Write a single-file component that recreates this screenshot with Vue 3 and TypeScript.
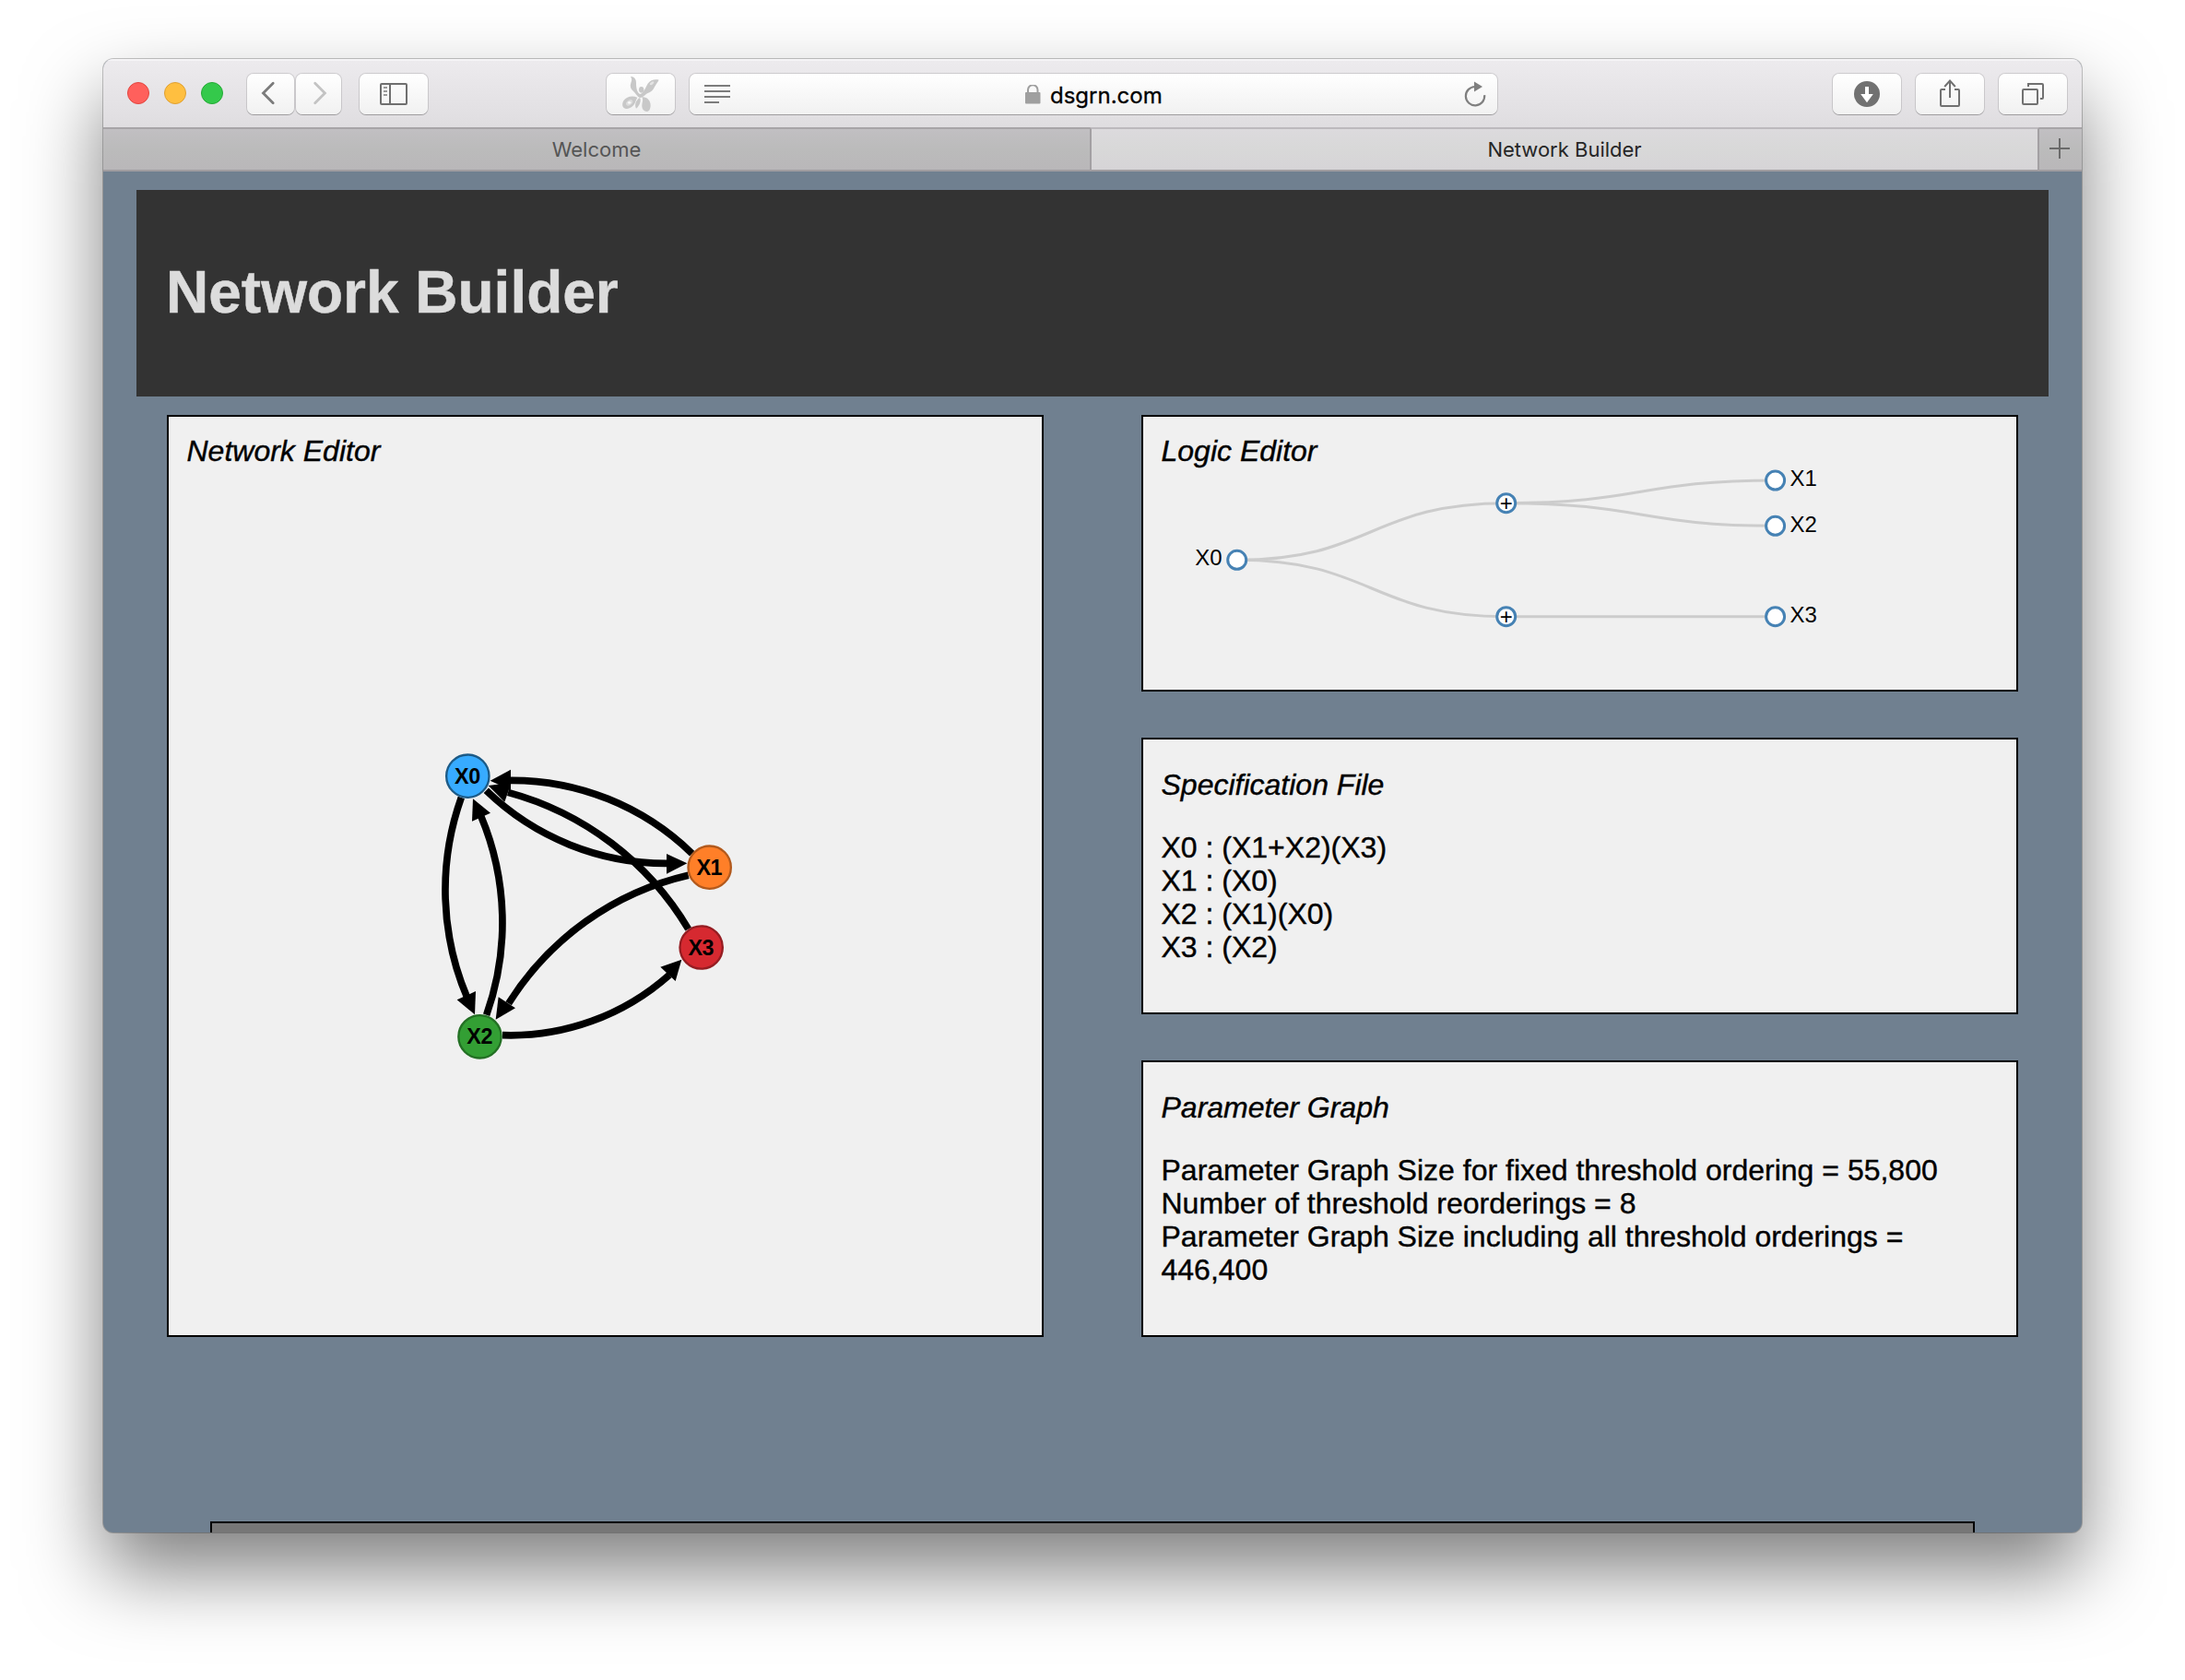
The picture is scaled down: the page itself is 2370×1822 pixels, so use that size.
<script setup lang="ts">
interface GraphNode {
  id: string
  x: number
  y: number
  fill: string
  stroke: string
}

interface GraphEdge {
  path: string
  head: string
}

interface TreeNode {
  label: string
  x: number
  y: number
  kind: 'root' | 'op' | 'leaf'
}

// Network graph, in thirds of a pixel
const nodes: GraphNode[] = [
  { id: 'X0', x: 202, y: 185, fill: '#37abff', stroke: '#1c5a86' },
  { id: 'X1', x: 989, y: 482, fill: '#ff7f28', stroke: '#b2591c' },
  { id: 'X2', x: 241.5, y: 1033, fill: '#339f34', stroke: '#237024' },
  { id: 'X3', x: 962, y: 742.5, fill: '#d62930', stroke: '#951d22' },
]

const edges: GraphEdge[] = [
  { path: 'M181 255A895 895 0 0 0 202 910', head: '225,961 167,913 228,885' },
  { path: 'M263 962A895 895 0 0 0 245 315', head: '219,259 276,305 216,332' },
  { path: 'M262 232A841 841 0 0 0 855 469', head: '916,469 849,438 849,503' },
  { path: 'M932 437A841 841 0 0 0 338 199', head: '275,200 342,164 342,230' },
  { path: 'M920 508A940 940 0 0 0 335 925', head: '293,977 302,904 357,940' },
  { path: 'M315 1028A777 777 0 0 0 858 832', head: '898,782 829,806 878,852' },
  { path: 'M920 683A980 980 0 0 0 333 238', head: '269,216 344,206 322,269' },
]

const tree: TreeNode[] = [
  { label: 'X0', x: 101.7, y: 155.3, kind: 'root' },
  { label: '+', x: 393.7, y: 93.7, kind: 'op' },
  { label: '+', x: 393.7, y: 216.7, kind: 'op' },
  { label: 'X1', x: 685.6, y: 69, kind: 'leaf' },
  { label: 'X2', x: 685.6, y: 118.3, kind: 'leaf' },
  { label: 'X3', x: 685.6, y: 216.7, kind: 'leaf' },
]

const treeLinks: [number, number][] = [[0, 1], [0, 2], [1, 3], [1, 4], [2, 5]]

function diagonal([from, to]: [number, number]): string {
  const a = tree[from]
  const b = tree[to]
  const mid = (a.x + b.x) / 2
  return `M${a.x} ${a.y}C${mid} ${a.y} ${mid} ${b.y} ${b.x} ${b.y}`
}

const specification = ['X0 : (X1+X2)(X3)', 'X1 : (X0)', 'X2 : (X1)(X0)', 'X3 : (X2)']
const parameters = [
  'Parameter Graph Size for fixed threshold ordering = 55,800',
  'Number of threshold reorderings = 8',
  'Parameter Graph Size including all threshold orderings = 446,400',
]
</script>

<template>
  <div class="desktop">
    <div class="window">
      <div class="toolbar">
        <div class="lights">
          <i class="light red"></i>
          <i class="light yellow"></i>
          <i class="light green"></i>
        </div>
        <div class="btn back">
          <svg width="51" height="44"><path d="M28.2 10.3L17.5 21L28.2 31.7" fill="none" stroke="#7b7b7b" stroke-width="2.8" stroke-linecap="round" /></svg>
        </div>
        <div class="btn forward">
          <svg width="49" height="44"><path d="M20.7 10.3L31.4 21L20.7 31.7" fill="none" stroke="#c3c3c3" stroke-width="2.8" stroke-linecap="round" /></svg>
        </div>
        <div class="btn sidebar">
          <svg width="74" height="44" fill="none" stroke="#6f6f6f" stroke-width="2">
            <rect x="23" y="11" width="28" height="22" rx="1" />
            <path d="M33 11V33" />
            <path d="M26 15H30M26 19H30M26 23H30" stroke="#999" />
          </svg>
        </div>
        <div class="btn extension">
          <svg width="74" height="44">
            <g transform="translate(-18 -30) scale(.33333)" fill="#c8c8c8">
              <path d="M132 99C145 98 151 110 150 122C150 138 154 152 163 156C175 152 180 135 188 122C196 111 210 107 224 110C219 118 215 124 210 133C206 143 198 150 188 153C180 157 172 168 163 168C152 164 150 154 141 147C132 140 129 130 133 120C136 112 137 106 132 99Z" />
              <ellipse cx="167" cy="142" rx="8" ry="10" />
              <path d="M154 167C138 160 118 164 109 178C102 190 106 203 117 204C134 205 146 190 149 178Z" />
              <path d="M162 168C168 178 160 196 150 203C144 192 148 176 162 168Z" />
              <path d="M169 166C185 164 197 178 197 192C197 205 192 213 184 213C174 212 168 203 169 192C170 182 174 176 169 166Z" />
              <ellipse cx="128" cy="184" rx="12" ry="8" fill="#dcdcdc" transform="rotate(-35 128 184)" />
              <ellipse cx="128" cy="184" rx="5" ry="4" fill="#f8f8f8" />
              <ellipse cx="201" cy="121" rx="8" ry="4" fill="#e4e4e4" transform="rotate(-35 201 121)" />
            </g>
          </svg>
        </div>
        <div class="btn address">
          <svg class="reader" width="28" height="20" fill="#7c7c7c">
            <rect width="28" height="2" />
            <rect y="6" width="28" height="2" />
            <rect y="12" width="28" height="2" />
            <rect y="18" width="16" height="2" />
          </svg>
          <div class="site">
            <svg width="17" height="21">
              <rect x="0" y="8" width="16.5" height="12.5" rx="1" fill="#9f9f9f" />
              <path d="M3 9V5.5A4.8 4.8 0 0 1 13.5 5.5V9" fill="none" stroke="#9f9f9f" stroke-width="2" />
            </svg>
            <span>dsgrn.com</span>
          </div>
          <svg class="reload" width="26" height="30">
            <path d="M13 6A10.2 10.2 0 1 0 23.2 15.2" fill="none" stroke="#7f7f7f" stroke-width="2.2" />
            <path d="M12 .4L21 6L12 11.6Z" fill="#7f7f7f" />
          </svg>
        </div>
        <div class="btn download">
          <svg width="74" height="44">
            <circle cx="37" cy="22" r="14" fill="#717171" />
            <path d="M35 14H39V22H43.8L37 31.3L30.2 22H35Z" fill="#fff" />
          </svg>
        </div>
        <div class="btn share">
          <svg width="74" height="44" fill="none" stroke="#717171" stroke-width="2">
            <path d="M32 17H28Q27 17 27 18V34Q27 35 28 35H46Q47 35 47 34V18Q47 17 46 17H42" />
            <path d="M37 26V8M31.2 14L37 7.5L42.8 14" />
          </svg>
        </div>
        <div class="btn overview">
          <svg width="74" height="44" fill="none" stroke="#717171" stroke-width="2">
            <rect x="26" y="17" width="16" height="16" rx="1" />
            <path d="M32 14V11H47Q48 11 48 12V26Q48 27 47 27H45" />
          </svg>
        </div>
      </div>

      <div class="tabs">
        <div class="tab">Welcome</div>
        <div class="tab active">Network Builder</div>
        <div class="tab add">
          <svg width="22" height="22" stroke="#6a6a6a" stroke-width="2"><path d="M11 0V22M0 11H22" /></svg>
        </div>
      </div>

      <main class="page">
        <header class="banner"><h1>Network Builder</h1></header>
        <div class="columns">
          <section class="panel editor">
            <svg class="canvas" width="947" height="996">
              <g transform="translate(257 328) scale(.33333)">
                <g v-for="(edge, i) in edges" :key="i">
                  <path :d="edge.path" fill="none" stroke="#000" stroke-width="23" />
                  <polygon :points="edge.head" />
                </g>
                <g v-for="node in nodes" :key="node.id">
                  <circle :cx="node.x" :cy="node.y" r="69.5" :fill="node.fill" :stroke="node.stroke" stroke-width="7" />
                  <text class="node-label" :x="node.x - 1" :y="node.y + 24.5">{{ node.id }}</text>
                </g>
              </g>
            </svg>
            <p class="title">Network Editor</p>
          </section>
          <div class="stack">
            <section class="panel logic">
              <svg class="canvas" width="947" height="296">
                <path v-for="(link, i) in treeLinks" :key="i" :d="diagonal(link)" fill="none" stroke="#ccc" stroke-width="3" />
                <g v-for="(n, i) in tree" :key="i">
                  <circle :cx="n.x" :cy="n.y" r="10" fill="#fff" stroke="#4682b4" stroke-width="3" />
                  <text v-if="n.kind === 'root'" class="tree-label" :x="n.x - 16" :y="n.y + 5.9" text-anchor="end">{{ n.label }}</text>
                  <text v-else-if="n.kind === 'leaf'" class="tree-label" :x="n.x + 16" :y="n.y + 6.2">{{ n.label }}</text>
                  <text v-else class="tree-label" :x="n.x" :y="n.y + 8.1" text-anchor="middle">{{ n.label }}</text>
                </g>
              </svg>
              <p class="title">Logic Editor</p>
            </section>
            <section class="panel info">
              <p class="title">Specification File</p>
              <p class="lines"><span v-for="line in specification" :key="line">{{ line }}</span></p>
            </section>
            <section class="panel info">
              <p class="title">Parameter Graph</p>
              <p class="lines"><span v-for="line in parameters" :key="line">{{ line }}</span></p>
            </section>
          </div>
        </div>
        <footer class="footer"></footer>
      </main>
    </div>
  </div>
</template>

<style>
body {
  background: #fff;
}
</style>

<style scoped>
.desktop {
  box-sizing: border-box;
  width: 2370px;
  height: 1822px;
  padding: 64px 112px 160px;
  overflow: hidden;
  background: #fff;
}
.window {
  display: flex;
  flex-direction: column;
  height: 1598px;
  overflow: hidden;
  border-radius: 11px;
  background: #708090;
  box-shadow: 0 0 0 1px rgba(0, 0, 0, 0.22), 0 42px 84px rgba(0, 0, 0, 0.5);
}
.toolbar {
  display: flex;
  flex: none;
  box-sizing: border-box;
  height: 74px;
  padding: 16px 16px 0 26px;
  background: linear-gradient(#edebee, #dfdde0);
  box-shadow: inset 0 2px 0 #f5f4f6;
}
.lights {
  display: flex;
  gap: 16px;
  margin: 9px 26px 0 0;
}
.light {
  box-sizing: border-box;
  width: 24px;
  height: 24px;
  border: 1px solid;
  border-radius: 50%;
}
.red { background: #ff605c; border-color: #e2463f; }
.yellow { background: #ffbf40; border-color: #dfa033; }
.green { background: #34c94b; border-color: #24aa35; }
.btn {
  flex: none;
  width: 74px;
  height: 44px;
  border-radius: 7px;
  background: linear-gradient(#fff, #f1f1f1);
  box-shadow: 0 0 0 1px rgba(0, 0, 0, 0.12), 0 1px 0 0 rgba(0, 0, 0, 0.2);
}
.btn svg { display: block; }
.back { width: 51px; margin-right: 2px; }
.forward { width: 49px; }
.sidebar { margin-left: 20px; }
.extension { margin-left: 194px; }
.address {
  display: flex;
  align-items: flex-start;
  box-sizing: border-box;
  width: 876px;
  margin-left: 16px;
  padding: 0 11px 0 16px;
}
.reader { margin-top: 12px; }
.reload { margin: 8px 0 0 auto; }
.site {
  display: flex;
  gap: 10px;
  margin-left: 320px;
  font: 24px/32px Inter, "Liberation Sans", sans-serif;
  color: #000;
  -webkit-text-stroke: 0.3px;
}
.site svg { margin-top: 12px; }
.site span { margin-top: 8px; }
.download { margin-left: 364px; }
.share, .overview { margin-left: 16px; }

.tabs {
  display: flex;
  flex: none;
  height: 48px;
  font: 22px/40px Inter, "Liberation Sans", sans-serif;
  text-align: center;
}
.tab {
  box-sizing: border-box;
  width: 1070px;
  padding-top: 2px;
  border-top: 2px solid #a7a4a7;
  border-bottom: 2px solid #a09da0;
  background: linear-gradient(#c1bfc2, #bbbbbb 50%, #b9b7b9);
  color: #555;
}
.tab.active {
  width: 1030px;
  border-top-color: #bcb9bd;
  border-left: 2px solid #a3a0a3;
  border-right: 2px solid #a3a0a3;
  background: linear-gradient(#dcdadd, #d8d8d8 50%, #d6d4d7);
  color: #262626;
}
.tab.add {
  display: flex;
  justify-content: center;
  width: 46px;
  padding: 10px 2px 0 0;
}

.page {
  flex: 1;
  min-height: 0;
  overflow: hidden;
  padding: 20px 36px 0;
  font: 32px/36px "Liberation Sans", Arial, sans-serif;
  color: #000;
}
.banner {
  box-sizing: border-box;
  height: 224px;
  padding: 75px 32px 0;
  background: #333;
}
.banner h1 {
  margin: 0;
  font-size: 64px;
  line-height: 72px;
  color: #dcdcdc;
  -webkit-text-stroke: 0.5px;
}
.columns {
  display: flex;
  justify-content: space-between;
  height: 1000px;
  margin: 20px 33px 0;
}
.stack {
  display: flex;
  flex-direction: column;
  gap: 50px;
}
.panel {
  position: relative;
  box-sizing: border-box;
  width: 951px;
  height: 300px;
  padding: 19px 20px 0 19.5px;
  border: 2px solid #000;
  background: #f0f0f0;
}
.panel.editor { height: 1000px; }
.panel.info { padding-top: 31px; }
.canvas {
  position: absolute;
  inset: 0;
}
.title {
  position: relative;
  margin: 0;
  font-style: italic;
  -webkit-text-stroke: 0.4px;
}
.lines {
  margin: 32px 0 0;
  -webkit-text-stroke: 0.4px;
}
.lines span { display: block; }
.node-label {
  font: bold 70px "Liberation Sans", Arial, sans-serif;
  letter-spacing: -1px;
  text-anchor: middle;
}
.tree-label {
  font: 24px "Liberation Sans", Arial, sans-serif;
  -webkit-text-stroke: 0.4px;
}
.footer {
  height: 100px;
  margin: 200px 80px 0;
  border: 2px solid #000;
  background: #777;
}
</style>
